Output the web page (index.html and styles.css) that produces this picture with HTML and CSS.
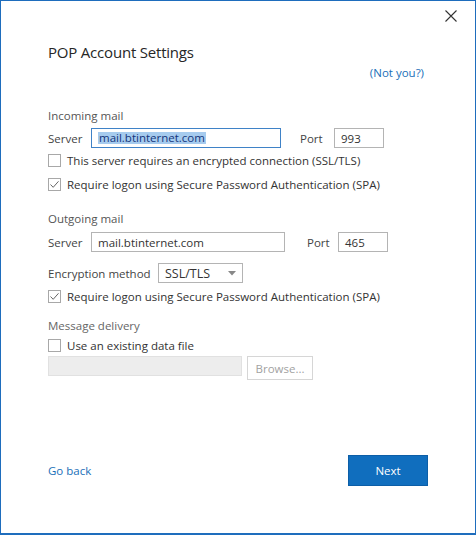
FILE: index.html
```html
<!DOCTYPE html>
<html>
<head>
<meta charset="utf-8">
<link rel="stylesheet" href="styles.css">
</head>
<body>
<div class="window">
  <div class="close-row">
    <svg class="close" width="12" height="12" viewBox="0 0 12 12"><path d="M0.5 0.5 L11.5 11.5 M11.5 0.5 L0.5 11.5" stroke="#333" stroke-width="1.1" fill="none"/></svg>
  </div>
  <h1 class="title">POP Account Settings</h1>
  <div class="notyou-row"><a class="link">(Not you?)</a></div>

  <div class="section-head head-in">Incoming mail</div>
  <div class="row row-in">
    <span class="label lbl-server">Server</span>
    <span class="input focus in-server"><span class="sel">mail.btinternet.com</span></span>
    <span class="label lbl-port1">Port</span>
    <span class="input in-port">993</span>
  </div>
  <div class="check-row"><span class="cb"></span><span>This server requires an encrypted connection (SSL/TLS)</span></div>
  <div class="check-row"><span class="cb"><svg width="11" height="11" viewBox="0 0 11 11"><path d="M1.5 5.5 L4.2 8.3 L9.5 2.3" stroke="#666" stroke-width="1" fill="none"/></svg></span><span>Require logon using Secure Password Authentication (SPA)</span></div>

  <div class="section-head head-out">Outgoing mail</div>
  <div class="row row-out">
    <span class="label lbl-server">Server</span>
    <span class="input out-server">mail.btinternet.com</span>
    <span class="label lbl-port2">Port</span>
    <span class="input in-port">465</span>
  </div>
  <div class="row row-enc">
    <span class="label lbl-enc">Encryption method</span>
    <span class="input select"><span>SSL/TLS</span><svg width="8" height="5" viewBox="0 0 8 5"><path d="M0 0 L8 0 L4 4.5 Z" fill="#888"/></svg></span>
  </div>
  <div class="check-row check-enc"><span class="cb"><svg width="11" height="11" viewBox="0 0 11 11"><path d="M1.5 5.5 L4.2 8.3 L9.5 2.3" stroke="#666" stroke-width="1" fill="none"/></svg></span><span>Require logon using Secure Password Authentication (SPA)</span></div>

  <div class="section-head head-msg">Message delivery</div>
  <div class="check-row check-msg"><span class="cb"></span><span>Use an existing data file</span></div>
  <div class="row row-file">
    <span class="input disabled"></span>
    <span class="browse">Browse...</span>
  </div>

  <div class="footer">
    <a class="link goback">Go back</a>
    <span class="next">Next</span>
  </div>
</div>
</body>
</html>
```

FILE: styles.css
```css
html, body {
  margin: 0;
  padding: 0;
  background: #fff;
}
.window {
  width: 476px;
  height: 535px;
  box-sizing: border-box;
  border: 1px solid #1e6dbd;
  border-bottom-width: 2px;
  display: flex;
  flex-direction: column;
  font-family: "Open Sans", "Noto Sans", sans-serif;
  font-size: 11.5px;
  color: #333;
}
.close-row {
  height: 30px;
  display: flex;
  justify-content: flex-end;
  align-items: center;
  padding-right: 18px;
}
.title {
  margin: 10px 47px 0;
  font-size: 15px;
  font-weight: 400;
  letter-spacing: -0.2px;
  line-height: 22px;
  color: #262626;
}
.notyou-row {
  margin-top: 2px;
  display: flex;
  justify-content: flex-end;
  padding-right: 51px;
  line-height: 16px;
}
.link {
  color: #1a6fb8;
  font-size: 11.5px;
}
.section-head {
  margin-left: 47px;
  line-height: 16px;
  color: #555;
}
.head-in { margin-top: 27px; }
.head-out { margin-top: 15px; }
.head-msg { margin-top: 10px; color: #666; }
.row {
  margin-left: 47px;
  height: 20px;
  display: flex;
  align-items: center;
}
.row-in { margin-top: 4px; }
.row-out { margin-top: 5px; }
.row-enc { margin-top: 11px; }
.row-file { margin-top: 0; height: 24px; align-items: flex-start; }
.label {
  color: #444;
  flex: none;
}
.lbl-server { width: 43px; }
.lbl-port1 { width: 34px; margin-left: 19px; }
.lbl-port2 { width: 31px; margin-left: 22px; }
.lbl-enc { width: 110px; }
.input {
  box-sizing: border-box;
  height: 20px;
  border: 1px solid #b4b4b4;
  display: flex;
  align-items: center;
  padding-left: 6px;
  flex: none;
  color: #333;
}
.focus { border-color: #3f82c7; }
.in-server { width: 190px; }
.out-server { width: 194px; }
.in-port { width: 50px; }
.sel {
  background: #a6cbee;
  color: #14357a;
  line-height: 12px;
  padding: 0 1px;
}
.select {
  width: 85px;
  height: 20px;
  justify-content: space-between;
  padding-right: 6px;
  font-size: 12.5px;
}
.check-row {
  margin-left: 47px;
  height: 24px;
  display: flex;
  align-items: center;
  gap: 6px;
  color: #333;
}
.check-enc { margin-top: 1px; }
.check-msg { height: 21px; margin-top: 1px; }
.cb {
  width: 13px;
  height: 13px;
  box-sizing: border-box;
  border: 1px solid #a8a8a8;
  display: flex;
  align-items: center;
  justify-content: center;
  flex: none;
}
.disabled {
  width: 194px;
  background: #ededed;
  border-color: #e1e1e1;
}
.browse {
  box-sizing: border-box;
  margin-left: 5px;
  width: 66px;
  height: 24px;
  border: 1px solid #d6d6d6;
  color: #a2a2a2;
  display: flex;
  align-items: center;
  justify-content: center;
}
.footer {
  margin-top: auto;
  padding: 0 47px 47px;
  display: flex;
  justify-content: space-between;
  align-items: center;
}
.next {
  width: 80px;
  height: 31px;
  box-sizing: border-box;
  background: #106ebe;
  border: 1px solid #0c5ea7;
  color: #fff;
  display: flex;
  align-items: center;
  justify-content: center;
}
```
